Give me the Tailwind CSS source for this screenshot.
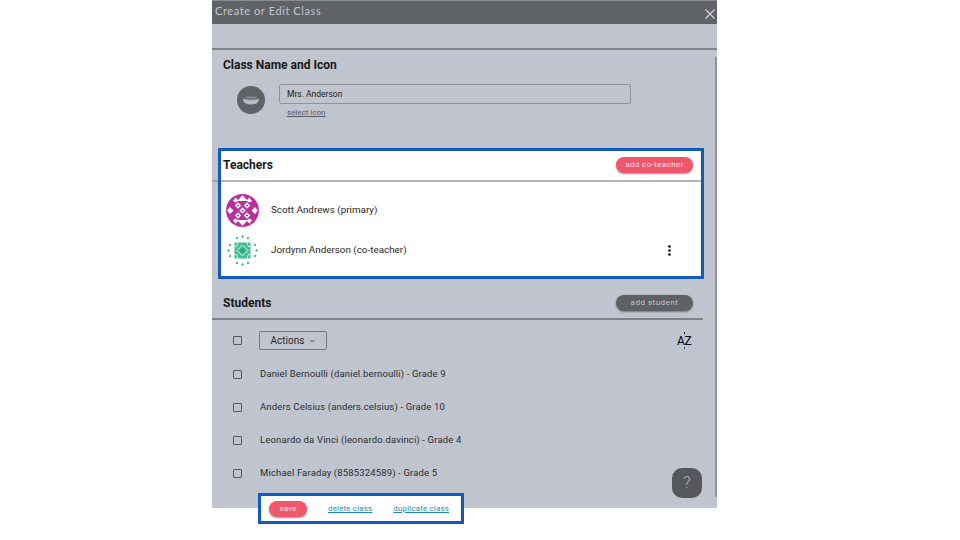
<!DOCTYPE html>
<html lang="en">
<head>
  <meta charset="UTF-8" />
  <title>Create or Edit Class</title>
  <script src="https://cdn.jsdelivr.net/npm/@tailwindcss/browser@4"></script>
</head>
<body class="bg-white w-[960px] h-[540px] overflow-hidden font-['Roboto',sans-serif]">
  <div class="relative ml-[212px] w-[505px] h-[508px] bg-[#c0c4ce]">

    <!-- title bar -->
    <div class="h-6 bg-[#5f6267] border-t border-[#8b8d92] flex items-center justify-between pl-[3px] pr-[1px]">
      <span class="font-['Lato',sans-serif] text-[11px] tracking-[0.6px] text-[#c3c6cc] -mt-[2px]">Create or Edit Class</span>
      <svg class="w-[12px] h-[12px] mt-[2px]" viewBox="0 0 12 12" fill="none" stroke="#d5d7dc" stroke-width="1.1"><path d="M1.500 1.500l9 9M10.500 1.500l-9 9"/></svg>
    </div>
    <div class="h-[26px] border-b-2 border-[#7f8287]"></div>

    <!-- class name -->
    <div class="h-[98px] pl-[11px] pt-[7px]">
      <h2 class="text-[12px] leading-4 font-bold text-[#17181a]">Class Name and Icon</h2>
      <div class="flex mt-[11px] ml-[14px] gap-[14px]">
        <div class="w-7 h-7 mt-[2px] rounded-full bg-[#5f6267] flex items-center justify-center">
          <svg class="w-[18px] h-[12px]" viewBox="0 0 18 12">
            <path d="M3 4c1-2 3-1.500 6-1.500S14 2 15 4c-3 1-9 1-12 0z" fill="#85878e"/>
            <path d="M1 4.500c3 1.800 13 1.800 16 0l-.5 2.500c-.5 2-3 3.500-7.500 3.500S2 9 1.500 7z" fill="#b9bcc4"/>
          </svg>
        </div>
        <div>
          <div class="w-[352px] h-5 border border-[#8f929a] rounded-[2px] flex items-center pl-[7px] text-[8.5px] text-[#222]">Mrs. Anderson</div>
          <a class="block ml-2 mt-[4px] text-[8px] leading-[10px] underline text-[#55575d]">select icon</a>
        </div>
      </div>
    </div>

    <!-- teachers -->
    <div class="relative h-[131px] ml-[6px] mr-[13px] bg-white border-[3px] border-[#1259c3]">
      <div class="absolute left-[-9px] top-[29px] w-[6px] h-[2px] bg-[#a2a4a8]"></div>
      <div class="h-[29px] box-content flex items-center justify-between pl-[2px] pr-[8px] border-b-2 border-[#b4b5b8]">
        <h2 class="text-[12px] font-bold text-[#17181a] -mt-[2px]">Teachers</h2>
        <button class="w-[77px] h-4 -mt-[2px] rounded-full bg-[#f0566c] shadow-[0_1px_2px_rgba(0,0,0,0.4)] text-[8px] tracking-[0.4px] text-[#fbe4e7]">add co-teacher</button>
      </div>
      <div class="flex items-center h-[40px] pl-[5px] mt-[8px] gap-3">
        <svg class="w-[33px] h-[33px] shrink-0" viewBox="0 0 33 33">
          <circle cx="16.500" cy="16.500" r="16.500" fill="#b92f9b"/>
          <g fill="#fff">
            <path d="M7 7l2.500-3.500L12 6l2-2 2.500-3 2.500 3 2 2 2.500-2.500L26 7l-2.500 1.500L21 7h-9L9.500 8.500z"/>
            <path d="M7 26l2.500 3.500L12 27l2 2 2.500 3 2.500-3 2-2 2.500 2.500L26 26l-2.500-1.500L21 26h-9l-2.500-1.500z"/>
            <path d="M1 16.500l3-3.500 3.500 3.500L4 20zM32 16.500L29 13l-3.500 3.500L29 20z"/>
          </g>
          <g fill="none" stroke="#fff" stroke-width="1.300">
            <path d="M12 9.200l2.300 2.300-2.300 2.300-2.300-2.300zM21 9.200l2.300 2.300-2.300 2.300-2.300-2.300zM16.500 14.200l2.300 2.300-2.300 2.300-2.300-2.300zM12 19.200l2.300 2.300-2.300 2.300-2.300-2.300zM21 19.200l2.300 2.300-2.300 2.300-2.300-2.300z"/>
          </g>
        </svg>
        <span class="text-[9.85px] text-[#26272a]">Scott Andrews (primary)</span>
      </div>
      <div class="flex items-center h-[40px] pl-[5px] gap-3">
        <svg class="w-[33px] h-[33px] shrink-0" viewBox="0 0 33 33">
          <rect x="8.500" y="8.500" width="16" height="16" fill="#45bd98"/>
          <g fill="none" stroke="#fff" stroke-width="0.800">
            <path d="M16.500 11l5.500 5.500-5.500 5.500-5.500-5.500z"/>
            <path d="M8.500 12.500h2l1-2v-2M24.500 12.500h-2l-1-2v-2M8.500 20.500h2l1 2v2M24.500 20.500h-2l-1 2v2"/>
          </g>
          <path d="M16.500 13.500l3 3-3 3-3-3z" fill="#2fa883"/>
          <g fill="#3fb893">
            <path d="M11 2.500l1.500 1.500L11 5.500 9.500 4zM16.500 1L18 2.500 16.500 4 15 2.500zM22 2.500L23.500 4 22 5.500 20.500 4zM11 27.500l1.500 1.500-1.500 1.500L9.500 29zM16.500 29l1.500 1.500-1.500 1.500-1.500-1.500zM22 27.500l1.500 1.500-1.500 1.500-1.500-1.500z"/>
            <path d="M4 9.500L5.500 11 4 12.500 2.500 11zM2.500 15L4 16.500 2.500 18 1 16.500zM4 20.500L5.500 22 4 23.500 2.500 22zM29 9.500l1.500 1.500-1.500 1.500-1.500-1.500zM30.500 15l1.500 1.500-1.500 1.500-1.500-1.500zM29 20.500l1.500 1.500-1.500 1.500-1.500-1.500z"/>
          </g>
          <g fill="none" stroke="#bfe6da" stroke-width="0.800">
            <path d="M3 6.500l2-2M28 4.500l2 2M3 26.500l2 2M28 28.500l2-2"/>
          </g>
        </svg>
        <span class="text-[9.85px] text-[#26272a]">Jordynn Anderson (co-teacher)</span>
        <svg class="ml-auto mr-[30px] w-[3px] h-[11px]" viewBox="0 0 3 11" fill="#000"><circle cx="1.500" cy="1.500" r="1.300"/><circle cx="1.500" cy="5.500" r="1.300"/><circle cx="1.500" cy="9.500" r="1.300"/></svg>
      </div>
    </div>

    <!-- students -->
    <div class="w-[491px] h-[41px] flex items-center justify-between pl-[11px] pr-[10px] pt-[9px] border-b-2 border-[#7f8287]">
      <h2 class="text-[12px] font-bold text-[#17181a]">Students</h2>
      <button class="w-[77px] h-4 rounded-full bg-[#5f6066] shadow-[0_1px_2px_rgba(0,0,0,0.4)] text-[8px] tracking-[0.5px] text-[#c4c6cc]">add student</button>
    </div>
    <div class="w-[491px] flex items-center h-[41px] pl-[21px] pr-[10px]">
      <span class="w-[9px] h-[9px] border border-[#55575c] rounded-[1px] -mt-[1px]"></span>
      <button class="ml-[17px] w-[68px] h-[19px] border border-[#77797f] rounded-[2px] flex items-center justify-center gap-[6px] text-[10px] text-[#26272a]">Actions
        <svg class="w-[5px] h-[4px]" viewBox="0 0 5 4" fill="none" stroke="#333" stroke-width="0.8"><path d="M0.500 1l2 2 2-2"/></svg>
      </button>
      <div class="ml-auto relative w-[16px] h-[14px] text-[12px] leading-[14px] text-black tracking-[-0.4px]">AZ
        <span class="absolute left-[7px] top-[-2px] w-[1px] h-[2px] bg-black"></span>
        <span class="absolute left-[7px] top-[13px] w-[1px] h-[2px] bg-black/70"></span>
      </div>
    </div>
    <ul class="pl-[21px] text-[9.5px] tracking-[0.15px] text-[#2b2c30]">
      <li class="h-[33px] flex items-center gap-[18px] -mt-[3px]"><span class="w-[9px] h-[9px] border border-[#55575c] rounded-[1px]"></span>Daniel Bernoulli (daniel.bernoulli) - Grade 9</li>
      <li class="h-[33px] flex items-center gap-[18px]"><span class="w-[9px] h-[9px] border border-[#55575c] rounded-[1px]"></span>Anders Celsius (anders.celsius) - Grade 10</li>
      <li class="h-[33px] flex items-center gap-[18px]"><span class="w-[9px] h-[9px] border border-[#55575c] rounded-[1px]"></span>Leonardo da Vinci (leonardo.davinci) - Grade 4</li>
      <li class="h-[33px] flex items-center gap-[18px]"><span class="w-[9px] h-[9px] border border-[#55575c] rounded-[1px]"></span>Michael Faraday (8585324589) - Grade 5</li>
    </ul>

    <!-- scrollbar -->
    <div class="absolute right-0 top-[57px] w-[2px] h-[440px] bg-[#8f929a]"></div>

    <!-- help -->
    <button class="absolute left-[460px] top-[468px] w-[30px] h-[30px] rounded-[10px] bg-[#55575c] text-[16px] text-[#b4b6bc] font-light">?</button>

    <!-- save bar -->
    <div class="absolute left-[46px] top-[493px] w-[206px] h-[31px] bg-white border-[3px] border-[#1259c3] flex items-center pl-[8px] text-[8px] tracking-[0.15px] text-[#1f8bb0]">
      <button class="w-[38px] h-4 rounded-full bg-[#f0566c] shadow-[0_1px_2px_rgba(0,0,0,0.4)] text-[#fbe4e7]">save</button>
      <a class="ml-[21px] underline">delete class</a>
      <a class="ml-[21px] underline">duplicate class</a>
    </div>
  </div>
</body>
</html>
